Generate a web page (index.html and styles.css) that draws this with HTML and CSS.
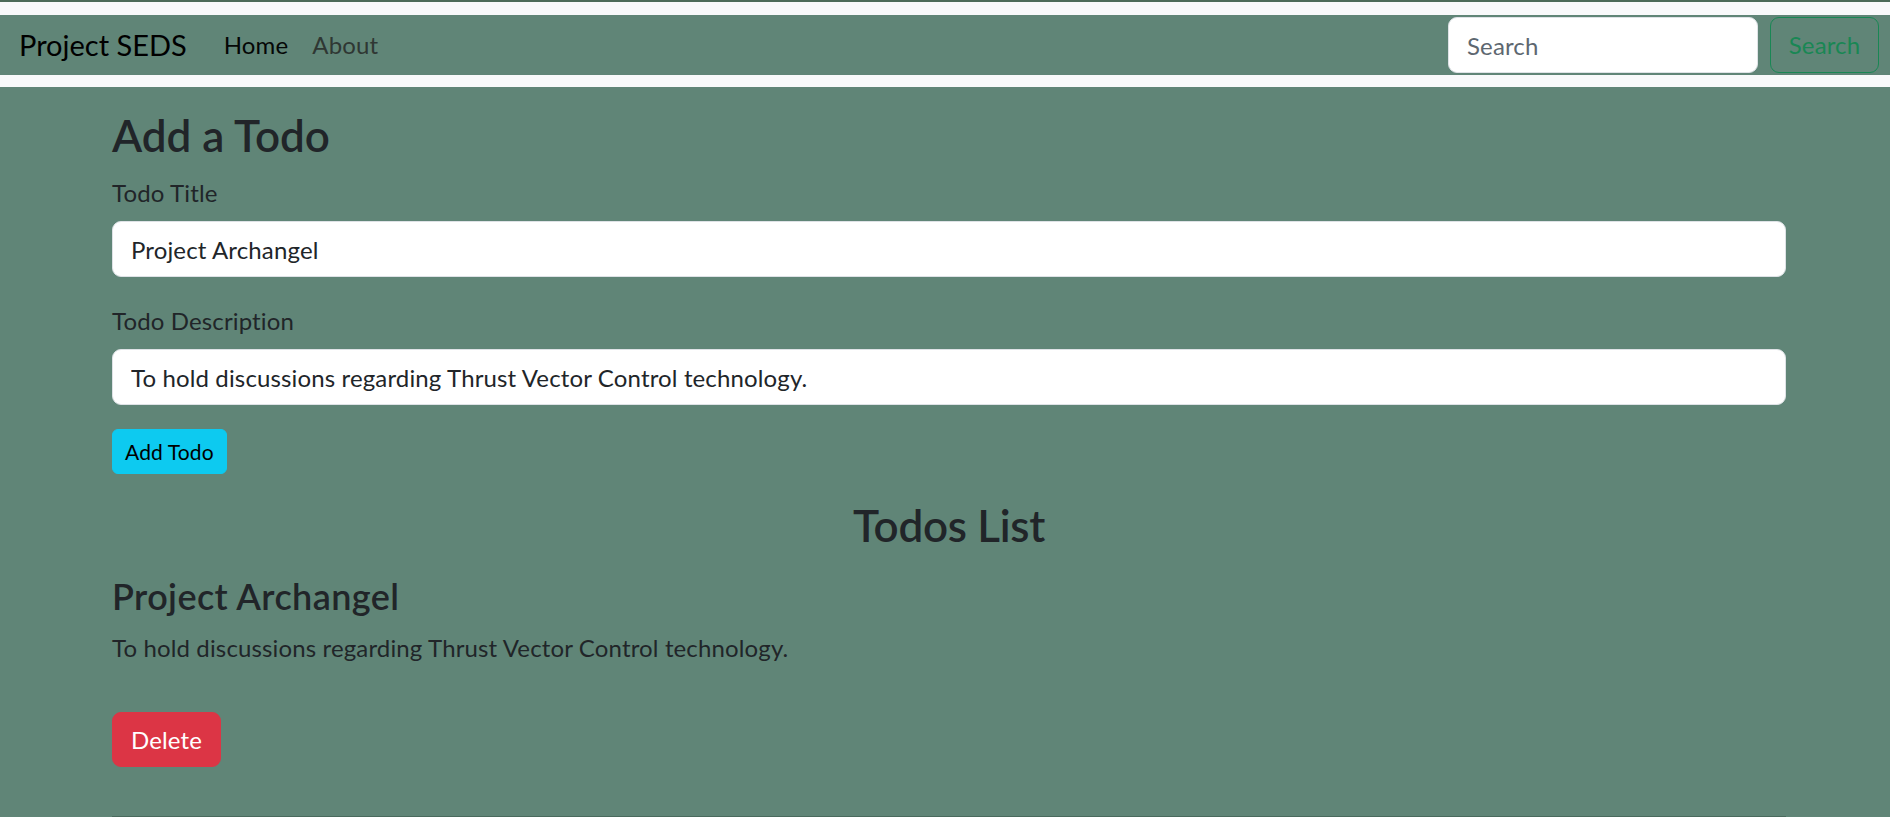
FILE: index.html
```html
<!DOCTYPE html>
<html lang="en">
<head>
<meta charset="utf-8">
<title>Project SEDS</title>
<link rel="stylesheet" href="styles.css">
</head>
<body>
<div class="topline"></div>
<header class="navwrap">
  <nav class="navbar">
    <a class="brand" href="#">Project SEDS</a>
    <ul class="navlinks">
      <li><a class="navlink active" href="#">Home</a></li>
      <li><a class="navlink" href="#">About</a></li>
    </ul>
    <form class="searchform">
      <input class="searchinput" type="search" placeholder="Search">
      <button class="searchbtn" type="button">Search</button>
    </form>
  </nav>
</header>
<main class="container">
  <h2 class="heading">Add a Todo</h2>
  <form class="todoform">
    <label class="formlabel" for="title">Todo Title</label>
    <input class="formcontrol" id="title" type="text" value="Project Archangel">
    <label class="formlabel second" for="desc">Todo Description</label>
    <input class="formcontrol" id="desc" type="text" value="To hold discussions regarding Thrust Vector Control technology.">
    <button class="btn btninfo" type="button">Add Todo</button>
  </form>
  <h2 class="heading listheading">Todos List</h2>
  <section class="todo">
    <h4 class="todotitle">Project Archangel</h4>
    <p class="tododesc">To hold discussions regarding Thrust Vector Control technology.</p>
    <button class="btn btndanger" type="button">Delete</button>
  </section>
  <hr class="rule">
</main>
</body>
</html>
```
FILE: styles.css
```css
* { box-sizing: border-box; }
html, body { margin: 0; padding: 0; }
body {
  background: #608577;
  font-family: "Lato", "Open Sans", sans-serif;
  color: #212529;
  font-size: 24px;
  line-height: 36px;
  letter-spacing: 0.14px;
  overflow: hidden;
}
input, button { letter-spacing: inherit; }
.topline {
  height: 2px;
  background: #4c6a58;
}
.navwrap {
  background: #f8f9fa;
  padding: 13px 0 12px;
}
.navbar {
  background: #608577;
  height: 60px;
  display: flex;
  align-items: center;
  padding: 0 11px 0 19px;
}
.brand {
  font-size: 29px;
  letter-spacing: 0;
  color: #000;
  text-decoration: none;
  margin-right: 25px;
}
.navlinks {
  list-style: none;
  margin: 0;
  padding: 0;
  display: flex;
}
.navlink {
  display: block;
  padding: 0 12px;
  font-size: 24px;
  color: #2f3733;
  text-decoration: none;
}
.navlink.active { color: #050706; }
.searchform {
  margin-left: auto;
  display: flex;
  gap: 12px;
}
.searchinput {
  width: 310px;
  height: 56px;
  border: 1px solid #dee2e6;
  border-radius: 9px;
  padding: 0 18px;
  font: inherit;
  font-size: 24px;
  color: #212529;
  background: #fff;
}
.searchinput::placeholder { color: #5d6770; }
.searchbtn {
  height: 56px;
  width: 109px;
  border: 1px solid #198754;
  border-radius: 9px;
  background: transparent;
  color: #198754;
  font: inherit;
  font-size: 24px;
  padding: 0;
}
.container {
  width: 1674px;
  margin-left: 112px;
  padding-top: 22px;
}
.heading {
  margin: 0;
  font-size: 44px;
  line-height: 53px;
  font-weight: 600;
  letter-spacing: 0;
}
.listheading {
  margin-top: 25px;
  text-align: center;
  letter-spacing: -0.3px;
}
.todoform {
  display: flex;
  flex-direction: column;
  align-items: flex-start;
}
.formlabel {
  margin-top: 13px;
  margin-bottom: 10px;
}
.formlabel.second { margin-top: 26px; }
.formcontrol {
  width: 100%;
  height: 56px;
  border: 1px solid #dee2e6;
  border-radius: 9px;
  padding: 0 18px;
  font: inherit;
  font-size: 24px;
  color: #212529;
  background: #fff;
}
.btn {
  font: inherit;
  border: 1px solid transparent;
}
.btninfo {
  margin-top: 24px;
  height: 45px;
  padding: 0 12px;
  font-size: 21px;
  border-radius: 6px;
  background: #0dcaf0;
  border-color: #0dcaf0;
  color: #000;
}
.todotitle {
  margin: 23px 0 0;
  font-size: 36px;
  line-height: 43px;
  font-weight: 600;
  letter-spacing: 0.4px;
}
.tododesc {
  margin: 12px 0 0;
}
.btndanger {
  margin-top: 46px;
  height: 55px;
  padding: 0 18px;
  font-size: 24px;
  border-radius: 9px;
  background: #dc3545;
  border-color: #dc3545;
  color: #fff;
}
.rule {
  margin: 49px 0 0;
  border: 0;
  border-top: 1px solid #4a6a5d;
  height: 0;
}
```
